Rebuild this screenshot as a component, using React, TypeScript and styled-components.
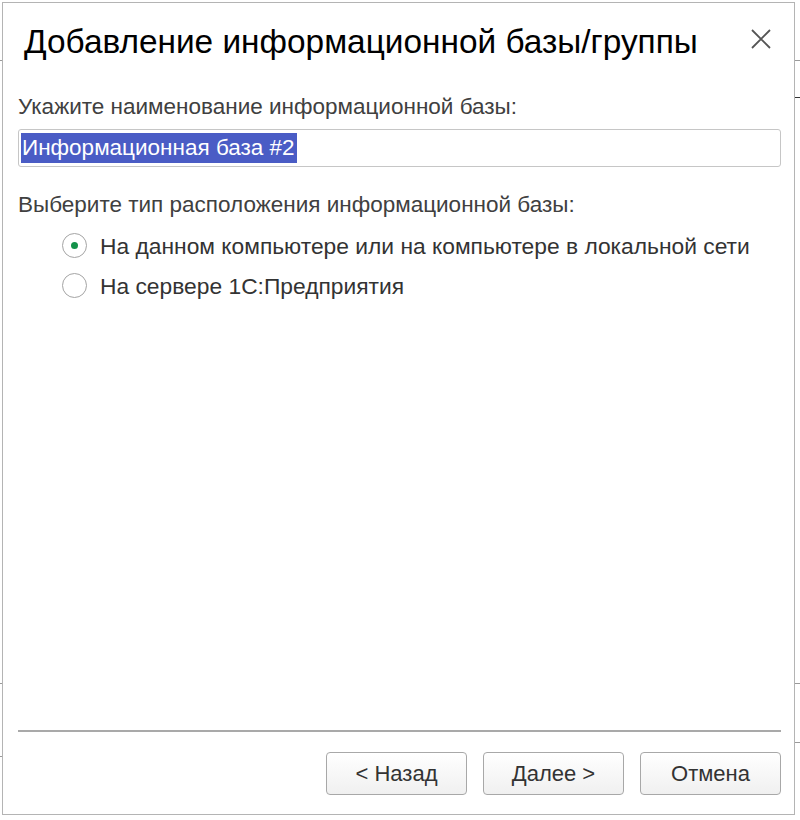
import React from "react"
import styled, {createGlobalStyle} from "styled-components"

const GlobalStyle = createGlobalStyle`
  html, body {
    margin: 0;
    padding: 0;
    background: #ffffff;
  }
  body {
    font-family: "Liberation Sans", Arial, sans-serif;
  }
`

const Screen = styled.div`
  position: relative;
  width: 800px;
  height: 820px;
  overflow: hidden;
  background: #ffffff;
`

// bits of the window behind the dialog
const BackLine = styled.div`
  position: absolute;
  height: 1px;
  background: #9a9a9a;
`

const Dialog = styled.div`
  position: relative;
  box-sizing: border-box;
  margin: 2px 0 0 2px;
  width: 793px;
  height: 813px;
  border: 1px solid #b4b4b4;
  background: #ffffff;
  display: flex;
  flex-direction: column;
`

const Header = styled.header`
  display: flex;
  align-items: flex-start;
  justify-content: space-between;
  padding: 21px 18px 0 21px;
`

const Title = styled.h1`
  margin: 0;
  font-size: 33.4px;
  line-height: 36px;
  font-weight: normal;
  color: #000000;
`

const CloseButton = styled.button`
  border: none;
  background: none;
  padding: 0;
  width: 30px;
  height: 30px;
  display: flex;
  align-items: center;
  justify-content: center;
  cursor: pointer;
`

const Body = styled.main`
  flex: 1;
  padding: 0 13px 0 15px;
  display: flex;
  flex-direction: column;
`

const Label = styled.div<{$top: number}>`
  margin-top: ${p => p.$top}px;
  font-size: 22.5px;
  line-height: 24px;
  color: #404040;
`

const NameField = styled.div`
  box-sizing: border-box;
  margin-top: 10px;
  height: 38px;
  border: 1px solid #c6c6c6;
  border-radius: 3px;
  padding: 3px 2px;
  display: flex;
  align-items: stretch;
`

const Selected = styled.span`
  background: #4a5cc5;
  color: #ffffff;
  font-size: 22.5px;
  line-height: 30px;
  padding: 0 2px 0 1px;
`

const RadioGroup = styled.div`
  margin-top: 16px;
  padding-left: 44px;
  display: flex;
  flex-direction: column;
  gap: 15px;
`

const RadioRow = styled.label`
  display: flex;
  align-items: center;
  gap: 13px;
  font-size: 22.8px;
  line-height: 24px;
  color: #333333;
  cursor: pointer;
`

const RadioCircle = styled.span<{$checked: boolean}>`
  box-sizing: border-box;
  width: 25px;
  height: 25px;
  border-radius: 50%;
  border: 1.5px solid #a4a4a4;
  background: #ffffff;
  display: flex;
  align-items: center;
  justify-content: center;

  &::after {
    content: "";
    width: 7px;
    height: 7px;
    border-radius: 50%;
    background: ${p => (p.$checked ? "#14924a" : "transparent")};
  }
`

const Footer = styled.footer`
  padding: 0 13px 19px 15px;
`

const Separator = styled.hr`
  margin: 0 0 20px 0;
  border: none;
  height: 2px;
  background: #a9a9a9;
`

const Buttons = styled.div`
  display: flex;
  justify-content: flex-end;
  gap: 16px;
`

const DialogButton = styled.button`
  box-sizing: border-box;
  width: 141px;
  height: 43px;
  border: 1px solid #a8a8a8;
  border-radius: 4px;
  background: linear-gradient(#ffffff, #f0f0f0);
  font-family: "Liberation Sans", Arial, sans-serif;
  font-size: 22px;
  color: #333333;
  cursor: pointer;
  padding: 0;
`

const options = [
    {label: "На данном компьютере или на компьютере в локальной сети", checked: true},
    {label: "На сервере 1С:Предприятия", checked: false},
]

const App = () => {
    return (
        <Screen>
            <GlobalStyle/>
            <BackLine style={{left: 0, top: 60, width: 3}}/>
            <BackLine style={{left: 795, top: 60, width: 5}}/>
            <BackLine style={{left: 795, top: 97, width: 5, background: "#333"}}/>
            <BackLine style={{left: 795, top: 683, width: 5}}/>
            <BackLine style={{left: 795, top: 742, width: 5}}/>
            <BackLine style={{left: 0, top: 683, width: 2}}/>
            <BackLine style={{left: 0, top: 756, width: 2}}/>
            <Dialog>
                <Header>
                    <Title>Добавление информационной базы/группы</Title>
                    <CloseButton aria-label="Закрыть">
                        <svg width="20" height="20" viewBox="0 0 20 20">
                            <path d="M1 1 L19 19 M19 1 L1 19" stroke="#555" strokeWidth="1.8"/>
                        </svg>
                    </CloseButton>
                </Header>

                <Body>
                    <Label $top={35}>Укажите наименование информационной базы:</Label>
                    <NameField>
                        <Selected>Информационная база #2</Selected>
                    </NameField>

                    <Label $top={26}>Выберите тип расположения информационной базы:</Label>
                    <RadioGroup>
                        {options.map(o => (
                            <RadioRow key={o.label}>
                                <RadioCircle $checked={o.checked}/>
                                {o.label}
                            </RadioRow>
                        ))}
                    </RadioGroup>
                </Body>

                <Footer>
                    <Separator/>
                    <Buttons>
                        <DialogButton>&lt; Назад</DialogButton>
                        <DialogButton>Далее &gt;</DialogButton>
                        <DialogButton>Отмена</DialogButton>
                    </Buttons>
                </Footer>
            </Dialog>
        </Screen>
    )
}

export default App
